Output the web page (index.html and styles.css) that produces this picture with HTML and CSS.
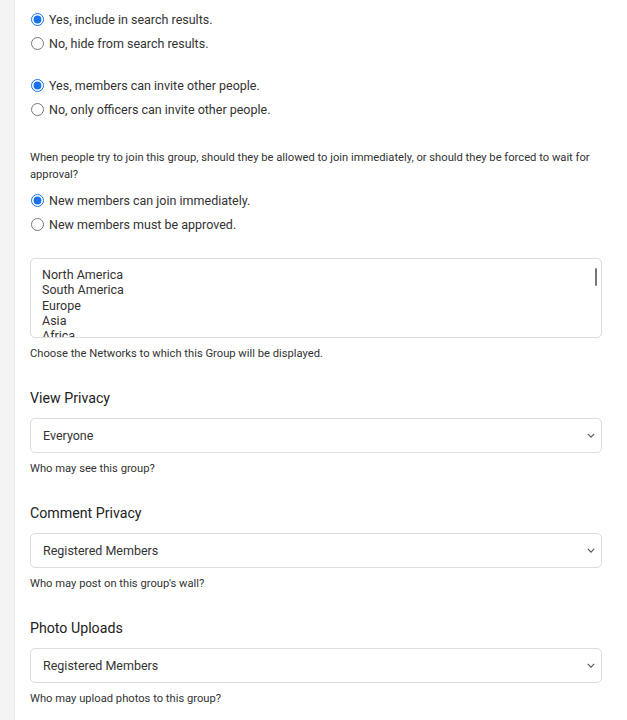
FILE: index.html
```html
<!DOCTYPE html>
<html lang="en">
<head>
  <meta charset="UTF-8">
  <title>Group Settings</title>
  <link rel="stylesheet" href="styles.css">
</head>
<body>
  <div class="rail"></div>

  <div class="content">
    <div class="options">
      <label class="option"><input type="radio" name="search" checked> Yes, include in search results.</label>
      <label class="option"><input type="radio" name="search"> No, hide from search results.</label>
    </div>

    <div class="options">
      <label class="option"><input type="radio" name="invite" checked> Yes, members can invite other people.</label>
      <label class="option"><input type="radio" name="invite"> No, only officers can invite other people.</label>
    </div>

    <p class="question">When people try to join this group, should they be allowed to join immediately, or should they be forced to wait for approval?</p>
    <div class="options">
      <label class="option"><input type="radio" name="approval" checked> New members can join immediately.</label>
      <label class="option"><input type="radio" name="approval"> New members must be approved.</label>
    </div>

    <div class="field networks">
      <div class="listbox">
        <ul>
          <li>North America</li>
          <li>South America</li>
          <li>Europe</li>
          <li>Asia</li>
          <li>Africa</li>
        </ul>
        <span class="thumb"></span>
      </div>
      <p class="help">Choose the Networks to which this Group will be displayed.</p>
    </div>

    <div class="field">
      <h3>View Privacy</h3>
      <div class="select">
        <span>Everyone</span>
        <svg viewBox="0 0 10 6" width="8" height="5"><path d="M1 1l4 4 4-4" fill="none" stroke="#555" stroke-width="1.4"/></svg>
      </div>
      <p class="help">Who may see this group?</p>
    </div>

    <div class="field">
      <h3>Comment Privacy</h3>
      <div class="select">
        <span>Registered Members</span>
        <svg viewBox="0 0 10 6" width="8" height="5"><path d="M1 1l4 4 4-4" fill="none" stroke="#555" stroke-width="1.4"/></svg>
      </div>
      <p class="help">Who may post on this group's wall?</p>
    </div>

    <div class="field">
      <h3>Photo Uploads</h3>
      <div class="select">
        <span>Registered Members</span>
        <svg viewBox="0 0 10 6" width="8" height="5"><path d="M1 1l4 4 4-4" fill="none" stroke="#555" stroke-width="1.4"/></svg>
      </div>
      <p class="help">Who may upload photos to this group?</p>
    </div>
  </div>
</body>
</html>
```

FILE: styles.css
```css
* {
  box-sizing: border-box;
  margin: 0;
  padding: 0;
}

body {
  font-family: Roboto, 'Noto Sans', sans-serif;
  display: flex;
  min-height: 100vh;
  background: #fff;
  color: #333;
}

.rail {
  width: 15px;
  flex-shrink: 0;
  background: #f4f4f4;
  border-right: 1px solid #ececec;
}

.content {
  flex: 1;
  padding: 7px 25px 0 15px;
}

.options {
  margin-bottom: 18px;
}

.option {
  display: flex;
  align-items: center;
  height: 24px;
  font-size: 12.5px;
  color: #333;
}

.option input {
  width: 13px;
  height: 13px;
  margin: 0 5px 0 1px;
  accent-color: #1a73e8;
}

.question {
  font-size: 11.2px;
  line-height: 17px;
  color: #333;
  margin-top: 28px;
  margin-bottom: 5px;
}

.networks {
  margin-top: 22px;
}

.listbox {
  position: relative;
  height: 80px;
  border: 1px solid #ddd;
  border-radius: 5px;
  overflow: hidden;
  padding: 8px 11px;
}

.listbox ul {
  list-style: none;
  font-size: 12.5px;
  line-height: 15.25px;
  color: #333;
}

.listbox .thumb {
  position: absolute;
  top: 9px;
  right: 4px;
  width: 2px;
  height: 18px;
  background: #777;
  border-radius: 1px;
}

.field {
  margin-bottom: 26px;
}

.field h3 {
  font-size: 14.2px;
  font-weight: 400;
  line-height: 20px;
  color: #222;
  margin-bottom: 10px;
}

.select {
  display: flex;
  align-items: center;
  justify-content: space-between;
  height: 35px;
  border: 1px solid #ddd;
  border-radius: 5px;
  padding: 0 6px 0 12px;
  font-size: 12.5px;
  color: #333;
}

.help {
  font-size: 11.2px;
  line-height: 17px;
  color: #333;
  margin-top: 7px;
}
```
